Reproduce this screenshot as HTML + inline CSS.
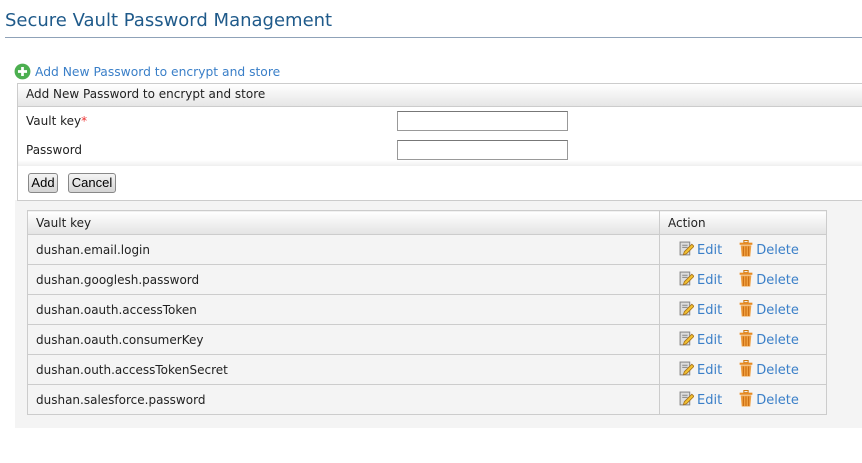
<!DOCTYPE html>
<html><head><style>
body{margin:0;width:862px;height:463px;background:#fff;font-family:"DejaVu Sans","Liberation Sans",sans-serif;font-size:12px;color:#222;position:relative;overflow:hidden}
.abs{position:absolute}
h1{position:absolute;left:5px;top:10px;margin:0;font-weight:normal;font-size:18px;color:#1f5a8a;white-space:nowrap}
.hr{left:5px;top:37px;width:857px;height:1px;background:#8fa2b8}
a{color:#3a7fc8;text-decoration:none}
.grad{background:linear-gradient(#fff,#e6e6e6)}
input{position:absolute;width:169px;height:18px;border:1px solid #999;border-top-color:#777;padding:0;margin:0;background:#fff}
.btn{position:absolute;top:173px;height:18px;border:1px solid #888;border-radius:3px;background:linear-gradient(#f4f4f4,#d4d4d4);font-family:"Liberation Sans",sans-serif;font-size:13px;line-height:18px;text-align:center;color:#000}
table{position:absolute;left:27px;top:210px;width:800px;border-collapse:collapse;background:#f4f4f4}
td,th{border:1px solid #ccc;height:29px;padding:0 0 0 8px;text-align:left;font-weight:normal}
th{height:23px;background:linear-gradient(#fff,#e3e3e3)}
td.act{font-size:13px;padding-bottom:1px;height:28px}
.ic{display:inline-block;vertical-align:-3px;margin-right:3px}
</style></head><body>
<h1>Secure Vault Password Management</h1>
<div class="abs hr"></div>
<div class="abs" style="left:14px;top:63px;white-space:nowrap;font-size:12.3px"><svg class="ic" width="17" height="17" viewBox="0 0 15 15" style="vertical-align:-4px;margin-right:4px"><circle cx="7.5" cy="7.5" r="7" fill="#4caf50"/><path d="M7.5 3.5v8M3.5 7.5h8" stroke="#fff" stroke-width="2.4"/></svg><a>Add New Password to encrypt and store</a></div>
<div class="abs" style="left:15px;top:200px;width:847px;height:228px;background:#f4f4f4"></div>
<div class="abs" style="left:17px;top:83px;width:845px;height:116px;border:1px solid #ccc;border-right:none;background:#fff"></div>
<div class="abs grad" style="left:18px;top:84px;width:844px;height:22px;border-bottom:1px solid #ccc"></div>
<div class="abs" style="left:26px;top:87px">Add New Password to encrypt and store</div>
<div class="abs" style="left:18px;top:160px;width:844px;height:6px;background:linear-gradient(#fff,#efefef)"></div>
<div class="abs" style="left:26px;top:114px">Vault key<span style="color:#e33">*</span></div>
<div class="abs" style="left:26px;top:143px">Password</div>
<input style="left:397px;top:111px"><input style="left:397px;top:140px">
<div class="btn" style="left:28px;width:28px">Add</div>
<div class="btn" style="left:68px;width:46px">Cancel</div>
<table></table>
<script>
var keys=["dushan.email.login","dushan.googlesh.password","dushan.oauth.accessToken","dushan.oauth.consumerKey","dushan.outh.accessTokenSecret","dushan.salesforce.password"];
var edit='<svg class="ic" width="15" height="16" viewBox="0 0 14 15"><rect x="1" y="1" width="9" height="12" fill="#ddd" stroke="#888"/><path d="M3 4h5M3 6h5" stroke="#888"/><path d="M4 13l1-3 7-7 2 2-7 7z" fill="#f2c230" stroke="#a8701a" stroke-width=".8"/></svg>';
var del='<svg class="ic" width="14" height="17" viewBox="0 0 13 16"><rect x="4.5" y="0.5" width="4" height="2" fill="none" stroke="#d07a10"/><rect x="0.5" y="2.5" width="12" height="2" fill="#e88a20"/><path d="M1.5 5h10l-1 10.5h-8z" fill="#f0a040"/><path d="M4 6v9M6.5 6v9M9 6v9" stroke="#c86a10"/></svg>';
var t=document.querySelector('table');var h='<tr><th style="width:623px">Vault key</th><th>Action</th></tr>';
keys.forEach(function(k){h+='<tr><td>'+k+'</td><td class="act"><span style="margin-left:11px">'+edit+'<a>Edit</a></span><span style="margin-left:17px">'+del+'<a>Delete</a></span></td></tr>'});
t.innerHTML=h;
</script>
</body></html>
